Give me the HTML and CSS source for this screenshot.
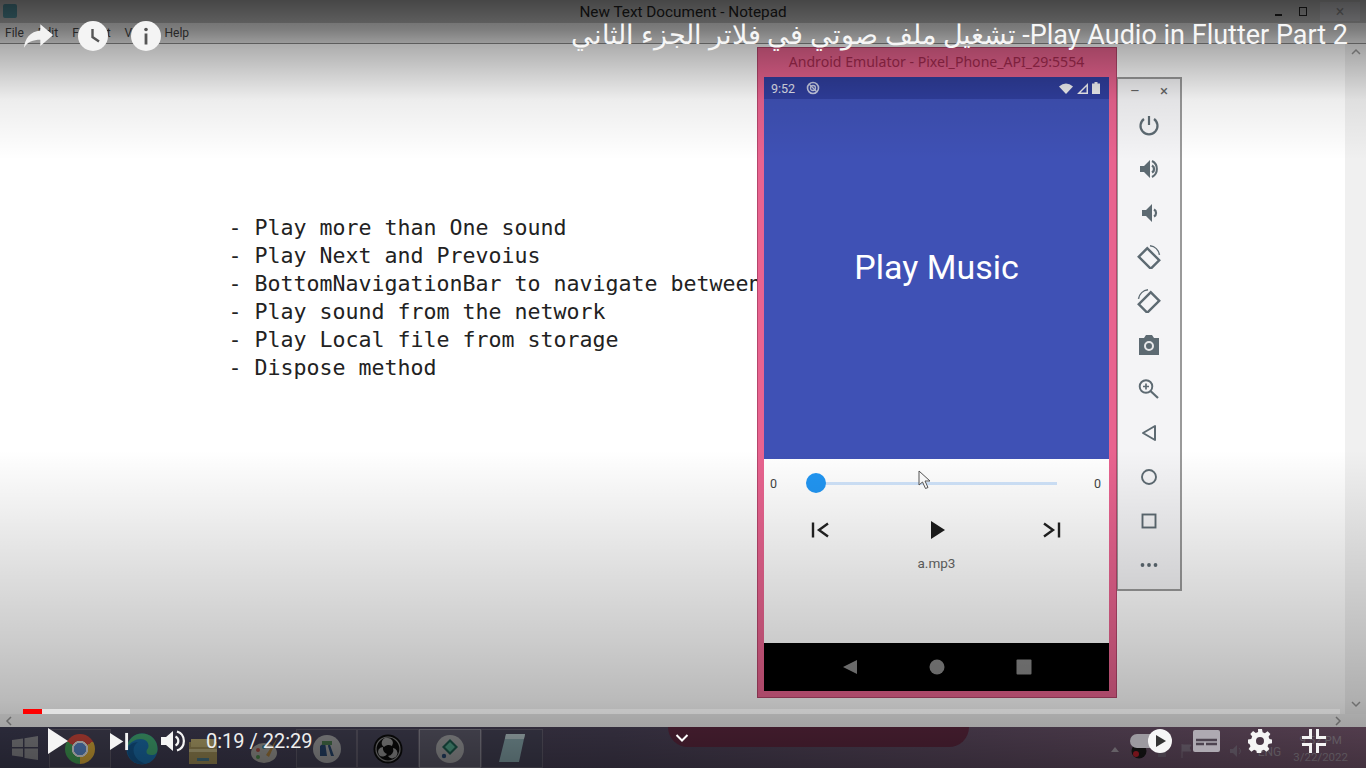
FILE: index.html
```html
<!DOCTYPE html>
<html lang="en">
<head>
    <meta charset="UTF-8">
    <meta name="viewport" content="width=device-width, initial-scale=1.0">
    <title>Play Audio in Flutter Part 2</title>
    <link rel="stylesheet" href="styles.css">
</head>
<body>

<div class="screen">

    <!-- Notepad behind everything -->
    <div class="notepad">
        <div class="np-title">
            <span class="np-app-icon"></span>
            <span class="np-title-text">New Text Document - Notepad</span>
            <span class="np-winbtns">
                <span class="np-min"></span>
                <span class="np-max"></span>
                <span class="np-close">×</span>
            </span>
        </div>
        <div class="np-menu">
            <span>File</span><span>Edit</span><span>Format</span><span>View</span><span>Help</span>
        </div>
        <div class="np-body">
            <pre class="np-text">- Play more than One sound
- Play Next and Prevoius
- BottomNavigationBar to navigate between screens
- Play sound from the network
- Play Local file from storage
- Dispose method</pre>
            <div class="np-vscroll">
                <svg width="10" height="8" viewBox="0 0 10 8"><path d="M1 6l4-4 4 4" fill="none" stroke="#999" stroke-width="1.5"/></svg>
                <svg width="10" height="8" viewBox="0 0 10 8"><path d="M1 2l4 4 4-4" fill="none" stroke="#999" stroke-width="1.5"/></svg>
            </div>
        </div>
        <div class="np-hscroll">
            <svg width="8" height="10" viewBox="0 0 8 10"><path d="M6 1L2 5l4 4" fill="none" stroke="#999" stroke-width="1.5"/></svg>
            <svg width="8" height="10" viewBox="0 0 8 10"><path d="M2 1l4 4-4 4" fill="none" stroke="#999" stroke-width="1.5"/></svg>
        </div>
    </div>

    <!-- Windows taskbar -->
    <div class="taskbar">
        <div class="tb-start">
            <svg width="26" height="24" viewBox="0 0 26 24"><path d="M0 4l11-1.500V11H0zM12.500 2.300L26 0v11H12.500zM0 12.500h11V21L0 19.500zM12.500 12.500H26V24l-13.500-2z" fill="#8d8d92"/></svg>
        </div>
        <div class="tb-item tb-boxed"><span class="ic-chrome"></span></div>
        <div class="tb-item">
            <svg width="32" height="32" viewBox="0 0 32 32"><circle cx="16" cy="16" r="15.500" fill="#1c74b4"/><path d="M16 .5C25 .5 31.500 7 31.500 16c0 4-2 6-6 6-3 0-5-1-5-3 0-3 2-3 2-6 0-4-3-7-8-7-5 0-10 3-13.500 8C2.500 6 8 .5 16 .5z" fill="#46b27a"/><path d="M1 15c3-4 7-6 11-6-3 2-4.500 5-4.500 8 0 6 5 12 12 13.500-1 .3-2.300.5-3.500.5C7 31.500 1 24 1 15z" fill="#145a94"/></svg>
        </div>
        <div class="tb-item tb-folder">
            <svg width="32" height="30" viewBox="0 0 32 30"><path d="M2 6h28v22H2z" fill="#a3925a"/><path d="M4 3h24v8H4z" fill="#c2b274"/><path d="M2 13h28v3H2z" fill="#c9bd8a"/><path d="M10 22h12v3H10z" fill="#4a7a8c"/></svg>
        </div>
        <div class="tb-item tb-folder">
            <svg width="30" height="30" viewBox="0 0 30 30"><ellipse cx="14" cy="17" rx="13" ry="10" fill="#a6a49f"/><circle cx="8" cy="14" r="2" fill="#a84a42"/><circle cx="14" cy="11" r="2" fill="#3f7f95"/><circle cx="8" cy="21" r="2" fill="#4e8a4b"/><path d="M28 1L16 19l3 2z" fill="#a87f3f"/></svg>
        </div>
        <div class="tb-item tb-boxed">
            <svg width="30" height="30" viewBox="0 0 30 30"><circle cx="15" cy="15" r="14" fill="#a5a6a8"/><path d="M8 22V12l5-4 2 14zM17 8l5 14h-3l-3-10z" fill="#27466e"/><path d="M10 7h10v4H10z" fill="#4c7a50"/></svg>
        </div>
        <div class="tb-item tb-boxed">
            <svg width="30" height="30" viewBox="0 0 30 30"><circle cx="15" cy="15" r="14.500" fill="#0c0c0c"/><circle cx="15" cy="15" r="12" fill="none" stroke="#8a8a8a" stroke-width="1.200"/><path d="M15 4a5 5 0 0 1 4 8 6 6 0 0 0-8 1 5 5 0 0 1 4-9zM6 21a5 5 0 0 1 4-8 6 6 0 0 0 4 7 5 5 0 0 1-8 1zM24 21a5 5 0 0 1-9 1 6 6 0 0 0 5-8 5 5 0 0 1 4 7z" fill="#9a9a9a"/></svg>
        </div>
        <div class="tb-item tb-boxed tb-active">
            <svg width="30" height="30" viewBox="0 0 30 30"><circle cx="15" cy="15" r="14" fill="#a5a6a8"/><path d="M15 5l8 8-8 8-8-8z" fill="#1f5d50"/><path d="M15 8l5 5-5 5-5-5z" fill="#55a98f"/><circle cx="9" cy="22" r="2.200" fill="#27466e"/></svg>
        </div>
        <div class="tb-item tb-boxed">
            <svg width="28" height="32" viewBox="0 0 28 32"><path d="M8 1h19l-6 28H1z" fill="#8aaab0"/><path d="M8 1h19l-1 5H7z" fill="#b9ccd0"/></svg>
        </div>
        <div class="tb-reflection"></div>
        <div class="tb-tray">
            <span class="tray-up"></span>
            <svg class="tray-obs" width="16" height="16" viewBox="0 0 16 16"><circle cx="8" cy="8" r="7.500" fill="#1a1a1a"/><circle cx="5" cy="11" r="3" fill="#c21f2c"/></svg>
            <svg class="tray-sq" width="10" height="14" viewBox="0 0 10 14"><path d="M1 1h8v12H1z" fill="#76687a"/></svg>
            <svg class="tray-flag" width="11" height="14" viewBox="0 0 11 14"><path d="M1 0v14M1 1h9l-2 3 2 3H1" fill="#86788a" stroke="#86788a"/></svg>
            <svg class="tray-spk" width="12" height="14" viewBox="0 0 12 14"><path d="M0 5v4h3l4 4V1L3 5z" fill="#85788a"/><path d="M9 4a4 4 0 0 1 0 6" fill="none" stroke="#85788a"/></svg>
            <span class="tray-lang">ENG</span>
            <span class="tray-clock"><span>9:52 PM</span><span>3/22/2022</span></span>
        </div>
    </div>

    <!-- Emulator window and its tool strip -->
    <div class="emu-wrap">
        <div class="emulator">
            <div class="emu-title">Android Emulator - Pixel_Phone_API_29:5554</div>
            <div class="phone">
                <div class="statusbar">
                    <span class="sb-time">9:52</span>
                    <svg class="sb-sync" width="14" height="14" viewBox="0 0 14 14"><circle cx="7" cy="7" r="5.500" fill="none" stroke="#c9cde6" stroke-width="1.600"/><circle cx="7" cy="7" r="2.500" fill="none" stroke="#c9cde6" stroke-width="1.300"/><path d="M3 3l8 8" stroke="#c9cde6" stroke-width="1.300"/></svg>
                    <span class="sb-right">
                        <svg width="14" height="11" viewBox="0 0 14 11"><path d="M0 3.500Q7-2.500 14 3.500L7 11z" fill="#f2f2f5"/></svg>
                        <svg width="11" height="11" viewBox="0 0 11 11"><path d="M11 0v11H0zM9.500 3.500L3.500 9.500h6z" fill="#f2f2f5" fill-rule="evenodd"/></svg>
                        <svg width="8" height="12" viewBox="0 0 8 12"><path d="M2.500 0h3v1.500H8V12H0V1.500h2.500z" fill="#f2f2f5"/></svg>
                    </span>
                </div>
                <div class="appbody">Play Music</div>
                <div class="player">
                    <div class="slider-row">
                        <span class="slider-num">0</span>
                        <span class="slider-track"><span class="slider-thumb"></span></span>
                        <span class="slider-num">0</span>
                    </div>
                    <div class="ctrl-row">
                        <svg width="20" height="20" viewBox="0 0 20 20"><path d="M3 2.500v15" stroke="#222" stroke-width="2.400" fill="none"/><path d="M18 3.500L9 10l9 6.500" stroke="#222" stroke-width="2.400" fill="none"/></svg>
                        <svg class="ctrl-play" width="18" height="20" viewBox="0 0 18 20"><path d="M2 1l14 9-14 9z" fill="#1c1c1c"/></svg>
                        <svg width="20" height="20" viewBox="0 0 20 20"><path d="M17 2.500v15" stroke="#222" stroke-width="2.400" fill="none"/><path d="M2 3.500L11 10l-9 6.500" stroke="#222" stroke-width="2.400" fill="none"/></svg>
                    </div>
                    <div class="track-name">a.mp3</div>
                    <svg class="mouse" width="14" height="20" viewBox="0 0 14 20"><path d="M1 1v14l3.500-3 3 6.500 2.500-1-3-6.500h5z" fill="#fff" stroke="#555" stroke-width="1"/></svg>
                </div>
                <div class="navbar">
                    <svg width="16" height="16" viewBox="0 0 16 16"><path d="M15 1v14L1 8z" fill="#8a8a8a"/></svg>
                    <svg width="16" height="16" viewBox="0 0 16 16"><circle cx="8" cy="8" r="7.500" fill="#8a8a8a"/></svg>
                    <svg width="16" height="16" viewBox="0 0 16 16"><rect x="0.500" y="0.500" width="15" height="15" rx="1" fill="#8a8a8a"/></svg>
                </div>
            </div>
        </div>

        <div class="toolstrip">
            <div class="ts-head"><span>–</span><span>×</span></div>
            <svg width="24" height="24" viewBox="0 0 24 24"><path d="M12 3v9M7 6a8.500 8.500 0 1 0 10 0" fill="none" stroke="#5d6a72" stroke-width="2.200"/></svg>
            <svg width="24" height="24" viewBox="0 0 24 24"><path d="M3 9v6h4l6 6V3L7 9z" fill="#5d6a72"/><path d="M15 8.500a4 4 0 0 1 0 7" fill="none" stroke="#5d6a72" stroke-width="2.400"/><path d="M15 4a9 9 0 0 1 0 16" fill="none" stroke="#5d6a72" stroke-width="2"/></svg>
            <svg width="24" height="24" viewBox="0 0 24 24"><path d="M5 9v6h4l6 6V3L9 9z" fill="#5d6a72"/><path d="M17 8.500a4 4 0 0 1 0 7" fill="none" stroke="#5d6a72" stroke-width="2.200"/></svg>
            <svg width="24" height="24" viewBox="0 0 24 24"><rect x="6" y="5" width="12" height="17" transform="rotate(-45 12 13.500)" fill="none" stroke="#5d6a72" stroke-width="2.400"/><path d="M13 .8a11 11 0 0 1 9.500 9" fill="none" stroke="#5d6a72" stroke-width="1.500"/></svg>
            <svg width="24" height="24" viewBox="0 0 24 24"><rect x="6" y="5" width="12" height="17" transform="rotate(45 12 13.500)" fill="none" stroke="#5d6a72" stroke-width="2.400"/><path d="M11 .8a11 11 0 0 0-9.500 9" fill="none" stroke="#5d6a72" stroke-width="1.500"/></svg>
            <svg width="24" height="24" viewBox="0 0 24 24"><path d="M2 5h5l2-3h6l2 3h5v17H2z" fill="#5d6a72"/><circle cx="12" cy="13" r="4" fill="none" stroke="#e8e8ea" stroke-width="2"/></svg>
            <svg width="24" height="24" viewBox="0 0 24 24"><circle cx="9" cy="9.500" r="6.300" fill="none" stroke="#5d6a72" stroke-width="1.900"/><path d="M13.500 14l7.500 7" stroke="#5d6a72" stroke-width="2.200"/><path d="M6 9.500h6M9 6.500v6" stroke="#5d6a72" stroke-width="1.700"/></svg>
            <svg width="24" height="24" viewBox="0 0 24 24"><path d="M18 5v14L6 12z" fill="none" stroke="#5d6a72" stroke-width="2" stroke-linejoin="round"/></svg>
            <svg width="24" height="24" viewBox="0 0 24 24"><circle cx="12" cy="12" r="7" fill="none" stroke="#5d6a72" stroke-width="1.900"/></svg>
            <svg width="24" height="24" viewBox="0 0 24 24"><rect x="5.500" y="5.500" width="13" height="13" fill="none" stroke="#5d6a72" stroke-width="1.900"/></svg>
            <svg width="24" height="24" viewBox="0 0 24 24"><circle cx="5.500" cy="12" r="1.900" fill="#5d6a72"/><circle cx="12" cy="12" r="1.900" fill="#5d6a72"/><circle cx="18.500" cy="12" r="1.900" fill="#5d6a72"/></svg>
        </div>
    </div>

    <!-- YouTube player chrome on top -->
    <div class="shade"></div>

    <div class="yt-top">
        <div class="yt-top-left">
            <svg width="31" height="26" viewBox="0 0 34 28"><path d="M19 1l14 12-14 12v-7C11 18 5 20 1 27 2 17 8 9 19 8z" fill="#f2f2f2"/></svg>
            <span class="yt-circle">
                <svg width="30" height="30" viewBox="0 0 30 30"><path d="M14.500 8v8l6.500 4.500" fill="none" stroke="#555" stroke-width="2.400"/></svg>
            </span>
            <span class="yt-circle">
                <svg width="30" height="30" viewBox="0 0 30 30"><circle cx="15" cy="8.500" r="1.800" fill="#555"/><path d="M15 12.500v11" stroke="#555" stroke-width="2.800"/></svg>
            </span>
        </div>
        <div class="yt-title" dir="rtl">Play Audio in Flutter Part 2- تشغيل ملف صوتي في فلاتر الجزء الثاني</div>
    </div>

    <div class="yt-progress"><span class="yt-played"></span><span class="yt-buffered"></span></div>

    <div class="yt-bottom">
        <div class="yt-left">
            <svg class="yt-play" width="20" height="26" viewBox="0 0 20 26"><path d="M0 0l20 13L0 26z" fill="#f4f4f4"/></svg>
            <svg class="yt-next" width="19" height="19" viewBox="0 0 20 20"><path d="M0 1l14 9L0 19z" fill="#f4f4f4"/><path d="M16 1h3v18h-3z" fill="#f4f4f4"/></svg>
            <svg class="yt-vol" width="24" height="22" viewBox="0 0 24 22"><path d="M0 7v8h5l7 6V1L5 7z" fill="#f4f4f4"/><path d="M14.500 6.500a5 5 0 0 1 0 9" fill="none" stroke="#f4f4f4" stroke-width="2.200"/><path d="M16 1.500a10 10 0 0 1 0 19" fill="none" stroke="#f4f4f4" stroke-width="2.200"/></svg>
            <span class="yt-time">0:19 / 22:29</span>
        </div>
        <svg class="yt-chevron" width="14" height="10" viewBox="0 0 14 10"><path d="M1.500 2L7 7.500 12.500 2" fill="none" stroke="#fff" stroke-width="2"/></svg>
        <div class="yt-right">
            <span class="yt-autoplay">
                <span class="yt-knob"><svg width="10" height="12" viewBox="0 0 10 12"><path d="M0 0l10 6-10 6z" fill="#333"/></svg></span>
            </span>
            <svg class="yt-cc" width="27" height="22" viewBox="0 0 27 22"><rect width="27" height="22" rx="2" fill="#aeaab2"/><path d="M3 10h21M3 14h8M13 14h11" stroke="#4d4450" stroke-width="2.400"/></svg>
            <svg class="yt-gear" width="24" height="24" viewBox="0 0 24 24"><path d="M10 0h4l.6 3.200 2.300 1 2.700-1.900 2.800 2.800-1.900 2.700 1 2.300L24 10.500v3.800l-3.500.6-1 2.300 1.900 2.700-2.800 2.800-2.700-1.900-2.300 1-.6 3.200h-4l-.6-3.200-2.300-1-2.700 1.900-2.800-2.800 1.900-2.700-1-2.300L0 14.300v-3.800l3.200-.6 1-2.300-1.900-2.700 2.800-2.800 2.700 1.900 2.300-1zM12 8a4 4 0 1 0 0 8 4 4 0 0 0 0-8z" fill="#f4f4f4" fill-rule="evenodd"/></svg>
            <svg class="yt-fs" width="24" height="24" viewBox="0 0 24 24"><path d="M7 0h3v10H0V7h7zM14 0h3v7h7v3H14zM0 14h10v10H7v-7H0zM14 14h10v3h-7v7h-3z" fill="#f4f4f4"/></svg>
        </div>
    </div>
</div>

</body>
</html>
```

FILE: styles.css
```css
* {
    box-sizing: border-box;
}

body {
    margin: 0;
    background-color: #000;
    font-family: "Roboto", "Liberation Sans", sans-serif;
}

.screen {
    position: relative;
    width: 1366px;
    height: 768px;
    overflow: hidden;
    background-color: #fff;
}

/* notepad */
.notepad {
    display: flex;
    flex-direction: column;
    height: 727px;
    background-color: #fff;
}

.np-title {
    position: relative;
    display: flex;
    align-items: center;
    justify-content: center;
    height: 23px;
    background-color: #b8b8b8;
    font-size: 15.300px;
    color: #202020;
}

.np-app-icon {
    position: absolute;
    left: 3px;
    top: 4px;
    width: 14px;
    height: 14px;
    background-color: #4f8b98;
    border-radius: 2px;
}

.np-winbtns {
    position: absolute;
    right: 6px;
    top: 0;
    display: flex;
    align-items: center;
    height: 23px;
    color: #888;
}

.np-min {
    width: 7px;
    height: 2px;
    margin: 6px 17px 0 0;
    background-color: #222;
}

.np-max {
    width: 8px;
    height: 9px;
    margin-right: 13px;
    border: 1px solid #222;
}

.np-close {
    width: 40px;
    text-align: center;
    font-size: 16px;
    background-color: #c4c4c8;
}

.np-menu {
    display: flex;
    gap: 14px;
    height: 21px;
    padding: 3px 0 0 5px;
    background-color: #e6e6e6;
    border-bottom: 1px solid #8a8a8a;
    font-size: 12px;
    color: #444;
}

.np-body {
    display: flex;
    flex: 1;
    min-height: 0;
}

.np-text {
    flex: 1;
    margin: 0;
    padding: 170px 0 0 228.500px;
    font-family: "DejaVu Sans Mono", "Liberation Mono", monospace;
    font-size: 21.600px;
    line-height: 28px;
    color: #222;
}

.np-vscroll {
    display: flex;
    flex-direction: column;
    justify-content: space-between;
    align-items: center;
    width: 21px;
    padding: 4px 0 6px;
    background-color: #f0f0f0;
}

.np-hscroll {
    display: flex;
    justify-content: space-between;
    align-items: center;
    height: 13px;
    padding: 0 24px 0 5px;
    background-color: #f3f3f3;
}

/* taskbar */
.taskbar {
    position: relative;
    display: flex;
    height: 41px;
    background: linear-gradient(90deg, #3f3e55 0%, #4a4258 45%, #7a5a72 100%);
}

.tb-start {
    display: flex;
    align-items: center;
    justify-content: center;
    width: 49px;
    padding-top: 1px;
}

.tb-item {
    display: flex;
    align-items: center;
    justify-content: center;
    width: 61.700px;
    margin-top: 2px;
}

.tb-folder {
    padding-top: 4px;
}

.tb-boxed {
    border: 1px solid #625e6e;
    background-color: #464458;
}

.tb-active {
    background-color: #5e5c6c;
    border-color: #8a8894;
}

.ic-chrome {
    width: 30px;
    height: 30px;
    border-radius: 50%;
    background:
        radial-gradient(circle, #5f8fd6 0 6px, #eee 6.500px 8px, transparent 8.500px),
        conic-gradient(from 60deg, #e2b23c 0 120deg, #46a85a 120deg 240deg, #d64a3e 240deg 360deg);
}

.tb-reflection {
    position: absolute;
    left: 668px;
    top: 0;
    width: 301px;
    height: 20px;
    background-color: #5e2840;
    border-radius: 0 0 30px 30px;
}

.tb-tray {
    position: absolute;
    right: 18px;
    top: 0;
    display: flex;
    align-items: center;
    height: 41px;
    color: #9b909c;
    font-size: 12px;
}

.tb-tray svg {
    margin-top: 6px;
}

.tray-up {
    width: 0;
    height: 0;
    margin: 4px 12px 0 0;
    border-left: 4px solid transparent;
    border-right: 4px solid transparent;
    border-bottom: 5px solid #a8a0aa;
}

.tray-obs {
    margin-right: 10px;
}

.tray-sq {
    margin-right: 14px;
}

.tray-flag {
    margin-right: 38px;
}

.tray-spk {
    margin-right: 16px;
}

.tray-lang {
    margin: 8px 12px 0 0;
}

.tray-clock {
    display: flex;
    flex-direction: column;
    align-items: center;
    line-height: 17px;
    padding-top: 2px;
    font-size: 11.500px;
}

/* emulator */
.emu-wrap {
    position: absolute;
    left: 757px;
    top: 47px;
    display: flex;
    align-items: flex-start;
}

.emulator {
    display: flex;
    flex-direction: column;
    width: 360px;
    height: 651px;
    padding: 0 7px 6px 6px;
    background-color: #e8638f;
    border: 1px solid #b5456b;
}

.emu-title {
    height: 29px;
    line-height: 28px;
    text-align: center;
    font-family: "Noto Sans", "Liberation Sans", sans-serif;
    font-size: 14.100px;
    color: #a52a50;
}

.phone {
    display: flex;
    flex-direction: column;
    flex: 1;
    background-color: #fff;
}

.statusbar {
    display: flex;
    align-items: center;
    height: 22px;
    padding: 0 9px 0 7px;
    background-color: #303f9f;
    color: #e4e6f2;
    font-size: 12.500px;
}

.sb-sync {
    margin-left: 11px;
}

.sb-right {
    display: flex;
    align-items: center;
    gap: 4px;
    margin-left: auto;
}

.appbody {
    display: flex;
    align-items: center;
    justify-content: center;
    height: 360px;
    padding-bottom: 24px;
    background-color: #3f51b5;
    font-size: 34px;
    color: #fff;
}

.player {
    position: relative;
    flex: 1;
    background-color: #fff;
}

.slider-row {
    display: flex;
    align-items: center;
    height: 48px;
    padding: 0 0 0 6px;
}

.slider-num {
    width: 10px;
    font-size: 12.500px;
    color: #444;
}

.slider-track {
    position: relative;
    width: 241px;
    height: 3px;
    margin: 0 37px 0 36px;
    background-color: #d0e4fb;
}

.slider-thumb {
    position: absolute;
    left: -10px;
    top: -9px;
    width: 20px;
    height: 20px;
    border-radius: 50%;
    background-color: #2196f3;
}

.ctrl-row {
    display: flex;
    align-items: center;
    justify-content: space-between;
    height: 20px;
    margin-top: 13px;
    padding: 0 47px 0 46px;
}

.ctrl-play {
    margin-left: 3px;
}

.track-name {
    margin-top: 15px;
    text-align: center;
    font-size: 13.500px;
    color: #666;
}

.mouse {
    position: absolute;
    left: 154px;
    top: 11px;
}

.navbar {
    display: flex;
    align-items: center;
    justify-content: center;
    gap: 71px;
    height: 48px;
    background-color: #000;
}

/* tool strip next to the emulator */
.toolstrip {
    display: flex;
    flex-direction: column;
    align-items: center;
    gap: 20px;
    width: 65px;
    height: 514px;
    margin-top: 30px;
    background-color: #f4f4f6;
    border: 2px solid #9a9a9a;
    border-left-width: 1px;
}

.ts-head {
    display: flex;
    justify-content: space-between;
    width: 38px;
    margin: 3px 0 -7px;
    height: 18px;
    line-height: 18px;
    font-size: 15px;
    color: #666;
}

/* player overlay */
.shade {
    position: absolute;
    left: 0;
    top: 0;
    width: 100%;
    height: 100%;
    background: linear-gradient(180deg,
        rgba(0, 0, 0, 0.62) 0,
        rgba(0, 0, 0, 0.45) 30px,
        rgba(0, 0, 0, 0.33) 43px,
        rgba(0, 0, 0, 0.07) 100px,
        rgba(0, 0, 0, 0) 160px,
        rgba(0, 0, 0, 0) 450px,
        rgba(0, 0, 0, 0.2) 640px,
        rgba(0, 0, 0, 0.27) 700px,
        rgba(0, 0, 0, 0.33) 727px,
        rgba(0, 0, 0, 0.45) 768px);
}

.yt-top {
    position: absolute;
    left: 23px;
    right: 18px;
    top: 21px;
    display: flex;
    justify-content: space-between;
}

.yt-top-left {
    display: flex;
    align-items: center;
    height: 30px;
    gap: 23.500px;
}

.yt-circle {
    display: block;
    width: 30px;
    height: 30px;
    border-radius: 50%;
    background-color: #f4f4f4;
}

.yt-title {
    height: 30px;
    line-height: 28px;
    font-size: 27px;
    color: #f6f6f6;
    white-space: nowrap;
}

.yt-progress {
    position: absolute;
    left: 23px;
    top: 709px;
    width: 1317px;
    height: 5px;
    display: flex;
    background-color: rgba(255, 255, 255, 0.2);
}

.yt-played {
    width: 19px;
    background-color: #f00;
}

.yt-buffered {
    width: 88px;
    background-color: #e2e2e2;
}

.yt-bottom {
    position: absolute;
    left: 0;
    right: 0;
    top: 729px;
    height: 26px;
}

.yt-left {
    position: absolute;
    left: 48px;
    top: 0;
    display: flex;
    align-items: center;
    height: 24px;
}

.yt-next {
    margin-left: 42px;
}

.yt-vol {
    margin-left: 32px;
}

.yt-time {
    margin-left: 21px;
    font-size: 20px;
    color: #eee;
    white-space: nowrap;
}

.yt-chevron {
    position: absolute;
    left: 675px;
    top: 4px;
}

.yt-right {
    position: absolute;
    right: 40px;
    top: 0;
    display: flex;
    align-items: center;
    height: 24px;
}

.yt-autoplay {
    position: relative;
    display: block;
    width: 38px;
    height: 14px;
    margin-right: 25px;
    border-radius: 7px;
    background-color: #9c9aa0;
}

.yt-knob {
    position: absolute;
    right: -4px;
    top: -5px;
    display: flex;
    align-items: center;
    justify-content: center;
    width: 24px;
    height: 24px;
    padding-left: 2px;
    border-radius: 50%;
    background-color: #f6f6f6;
}

.yt-gear {
    margin: 0 30px 0 28px;
}
```
